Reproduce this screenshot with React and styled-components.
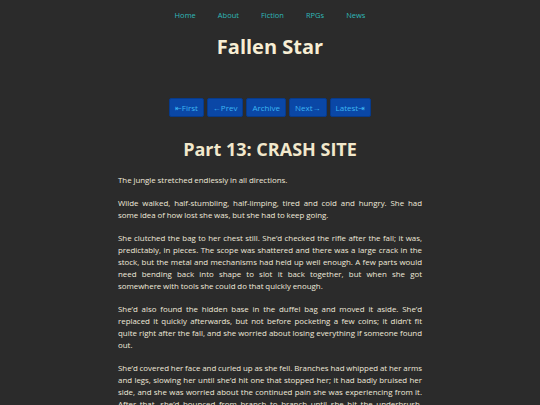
import React from "react";
import styled, { createGlobalStyle } from "styled-components";

const GlobalStyle = createGlobalStyle`
  html, body {
    margin: 0;
    padding: 0;
    background: #2b2b2b;
  }
  body {
    font-family: "Open Sans", "Noto Sans", sans-serif;
  }
`;

const paragraphs = [
  "The jungle stretched endlessly in all directions.",
  "Wilde walked, half-stumbling, half-limping, tired and cold and hungry. She had some idea of how lost she was, but she had to keep going.",
  "She clutched the bag to her chest still. She’d checked the rifle after the fall; it was, predictably, in pieces. The scope was shattered and there was a large crack in the stock, but the metal and mechanisms had held up well enough. A few parts would need bending back into shape to slot it back together, but when she got somewhere with tools she could do that quickly enough.",
  "She’d also found the hidden base in the duffel bag and moved it aside. She’d replaced it quickly afterwards, but not before pocketing a few coins; it didn’t fit quite right after the fall, and she worried about losing everything if someone found out.",
  "She’d covered her face and curled up as she fell. Branches had whipped at her arms and legs, slowing her until she’d hit one that stopped her; it had badly bruised her side, and she was worried about the continued pain she was experiencing from it. After that, she’d bounced from branch to branch until she hit the underbrush, where she laid a few moments in a daze before gathering her senses and getting up.",
];

const App = () => {
  return (
    <>
      <GlobalStyle />
      <Page>
        <Nav>
          {["Home", "About", "Fiction", "RPGs", "News"].map((item) => (
            <NavLink key={item} href="#">
              {item}
            </NavLink>
          ))}
        </Nav>
        <SiteTitle>Fallen Star</SiteTitle>
        <Pager>
          <PageButton>⇤First</PageButton>
          <PageButton>←Prev</PageButton>
          <PageButton>Archive</PageButton>
          <PageButton>Next→</PageButton>
          <PageButton>Latest⇥</PageButton>
        </Pager>
        <ChapterTitle>Part 13: CRASH SITE</ChapterTitle>
        <Story>
          {paragraphs.map((p, i) => (
            <Paragraph key={i}>{p}</Paragraph>
          ))}
        </Story>
      </Page>
    </>
  );
};

const Page = styled.div`
  display: flex;
  flex-direction: column;
  align-items: center;
  height: 405px;
  overflow: hidden;
  color: #efe9da;
`;

const Nav = styled.nav`
  display: flex;
  gap: 22px;
  padding-top: 10px;
`;

const NavLink = styled.a`
  color: #2fb8b8;
  font-size: 7.5px;
  text-decoration: none;
`;

const SiteTitle = styled.h1`
  margin: 15px 0 0;
  font-size: 20px;
  font-weight: 700;
  color: #f7eed4;
  line-height: 1.2;
`;

const Pager = styled.div`
  display: flex;
  gap: 3px;
  margin-top: 39px;
`;

const PageButton = styled.button`
  font-family: "Open Sans", "Noto Sans", sans-serif;
  font-size: 8px;
  color: #3cb6f2;
  background: #0a47a6;
  border: 1px solid #073a8a;
  border-radius: 2px;
  height: 19px;
  padding: 0 5px;
  cursor: pointer;
`;

const ChapterTitle = styled.h2`
  margin: 22px 0 0;
  font-size: 18px;
  font-weight: 700;
  color: #f2e8cc;
  line-height: 1.2;
`;

const Story = styled.div`
  width: 304px;
  margin-top: 13px;
`;

const Paragraph = styled.p`
  margin: 0 0 11px;
  font-size: 7.9px;
  line-height: 12px;
  word-spacing: -0.25px;
  text-align: justify;
`;

export default App;
